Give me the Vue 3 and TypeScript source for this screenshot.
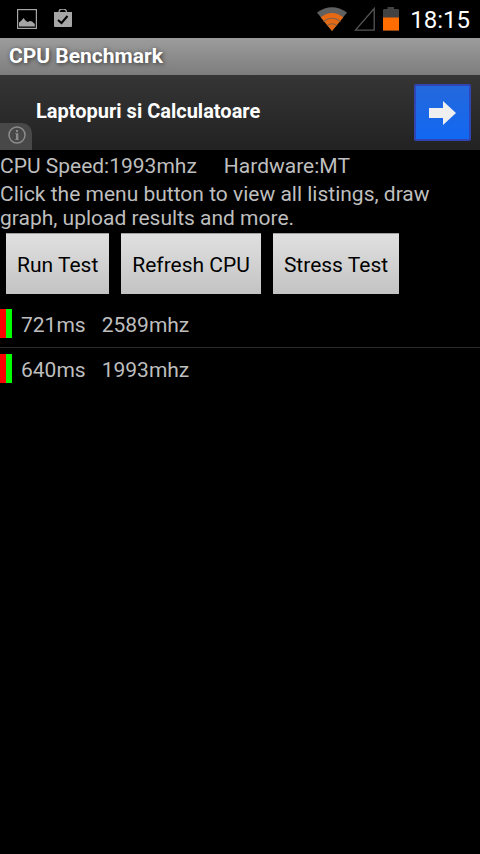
<script setup lang="ts">
interface Result {
  time: string
  speed: string
}

const results: Result[] = [
  { time: '721ms', speed: '2589mhz' },
  { time: '640ms', speed: '1993mhz' },
]
const actions: string[] = ['Run Test', 'Refresh CPU', 'Stress Test']
</script>

<template>
  <div class="screen">
    <header class="status">
      <div class="notices">
        <svg width="20" height="20" viewBox="0 0 20 20" aria-hidden="true">
          <rect x="0.6" y="0.6" width="18.800" height="18.800" fill="none" stroke="#a6a6a6" stroke-width="1.200" />
          <path d="M2 17.500V13.500L4.500 11.500L6.500 9L8.500 11.500L10.500 13L13 12L15 12.500L17.800 15V17.500Z" fill="#a6a6a6" />
        </svg>
        <svg width="20" height="20" viewBox="0 0 20 20" aria-hidden="true">
          <path d="M6 5V3.500Q6 0.200 9 0.200H10.500Q13.500 0.200 13.500 3.500V5" fill="none" stroke="#a6a6a6" stroke-width="1.300" />
          <path d="M1 3H19V17Q19 18 18 18H2Q1 18 1 17Z" fill="#a6a6a6" />
          <path d="M5 11L8.500 14L14.500 7" fill="none" stroke="#000" stroke-width="2" />
        </svg>
      </div>
      <div class="system">
        <svg width="30" height="24" viewBox="0 0 30 24" aria-hidden="true">
          <path d="M0 5.500Q15 -5 30 5.500L15 24Z" fill="#606060" />
          <path d="M3.700 10.300Q15 1.700 26.300 10.300L15 24Z" fill="#e66a14" />
          <path d="M6.500 14.500Q15 8 23.500 14.500M10 18.500Q15 15 20 18.500" fill="none" stroke="#80604a" stroke-width="1.200" />
        </svg>
        <svg class="signal" width="21" height="24" viewBox="0 0 21 24" aria-hidden="true">
          <path d="M1.500 23.200H20.200V1.500Z" fill="none" stroke="#555" stroke-width="1.300" />
        </svg>
        <svg class="battery" width="16" height="24" viewBox="0 0 16 24" aria-hidden="true">
          <path d="M0 23.500V3Q0 2 1 2H4.500V0H11V2H15Q16 2 16 3V23.500Z" fill="#424242" />
          <path d="M0 10.500H16V23.500H0Z" fill="#ff6d00" />
        </svg>
        <time class="clock">18:15</time>
      </div>
    </header>

    <h1 class="title">CPU Benchmark</h1>

    <aside class="ad">
      <span class="ad-text">Laptopuri si Calculatoare</span>
      <button class="ad-go" type="button" aria-label="Open">
        <svg width="28" height="24" viewBox="0 0 28 24" aria-hidden="true">
          <path d="M0 7H14V0L27 12L14 24V17H0Z" fill="#efefef" />
        </svg>
      </button>
      <button class="ad-info" type="button" aria-label="Info">
        <svg width="18" height="18" viewBox="0 0 18 18" aria-hidden="true">
          <circle cx="9" cy="9" r="8" fill="none" stroke="#8c8c8c" stroke-width="1.500" />
          <path d="M7 7.500H10V13.500M7 13.500H11" fill="none" stroke="#777" stroke-width="1" />
          <path d="M9 7.500V14" fill="none" stroke="#8c8c8c" stroke-width="2" />
          <rect x="8" y="4" width="2" height="2" fill="#8c8c8c" />
        </svg>
      </button>
    </aside>

    <main>
      <div class="specs">
        <span>CPU Speed:1993mhz</span>
        <span>Hardware:MT</span>
      </div>
      <p class="hint">Click the menu button to view all listings, draw graph, upload results and more.</p>
      <div class="actions">
        <button v-for="label in actions" :key="label" class="action" type="button">{{ label }}</button>
      </div>
      <ul class="results">
        <li v-for="result in results" :key="result.time" class="result">
          <span class="marker"></span>
          <span class="time">{{ result.time }}</span>
          <span>{{ result.speed }}</span>
        </li>
      </ul>
    </main>
  </div>
</template>

<style>
body {
  background: #000;
}
</style>

<style scoped>
.screen {
  min-height: 100vh;
  background: #000;
  color: #bebebe;
  font-family: Roboto, sans-serif;
  font-size: 21px;
  line-height: 24px;
}
svg {
  display: block;
}
button {
  border: 0;
  padding: 0;
  font: inherit;
}
.status {
  display: flex;
  justify-content: space-between;
  align-items: center;
  height: 38px;
  padding: 0 10px 0 17px;
}
.notices {
  display: flex;
  gap: 16px;
}
.system {
  display: flex;
  align-items: center;
}
.signal {
  margin-left: 7px;
}
.battery {
  margin-left: 8px;
}
.clock {
  margin-left: 11px;
  padding-top: 2px;
  color: #fff;
  font-size: 24px;
}
.title {
  margin: 0;
  padding: 6px 9px 7px;
  background: linear-gradient(#9c9c9c, #7d7d7d);
  color: #fff;
  font-size: 21px;
  font-weight: 700;
  line-height: 24px;
  text-shadow: 1px 1px 4px #333;
}
.ad {
  position: relative;
  display: flex;
  justify-content: space-between;
  align-items: center;
  height: 75px;
  padding: 0 9px 0 36px;
  box-sizing: border-box;
  background: linear-gradient(#353535, #222);
}
.ad-text {
  padding-bottom: 4px;
  color: #fff;
  font-size: 20px;
  font-weight: 700;
}
.ad-go {
  display: flex;
  align-items: center;
  width: 57px;
  height: 57px;
  padding-left: 13px;
  border: 2px solid #3044b4;
  border-radius: 2px;
  background: linear-gradient(#2468dc, #1268f2);
}
.ad-info {
  position: absolute;
  left: 0;
  bottom: 0;
  width: 32px;
  height: 27px;
  padding: 0 0 4px 8px;
  border-radius: 0 10px 0 0;
  background: #484848;
}
.specs {
  display: flex;
  gap: 27px;
  padding: 4px 0;
}
.hint {
  margin: 0;
}
.actions {
  display: flex;
  gap: 12px;
  padding: 3px 6px 9px;
}
.action {
  height: 61px;
  padding: 2px 11px 0;
  border-top: 1px solid #a0a0a0;
  background: linear-gradient(#e0e0e0, #c3c3c3);
  color: #000;
}
.results {
  margin: 0;
  padding: 0;
  list-style: none;
}
.result {
  display: flex;
  padding: 6px 0;
  line-height: 32px;
}
.result + .result {
  border-top: 1px solid #2b2b2b;
}
.marker {
  width: 12px;
  height: 29px;
  margin-right: 9px;
  background: linear-gradient(90deg, #f00 50%, #0f0 50%);
}
.time {
  margin-right: 16px;
}
</style>
